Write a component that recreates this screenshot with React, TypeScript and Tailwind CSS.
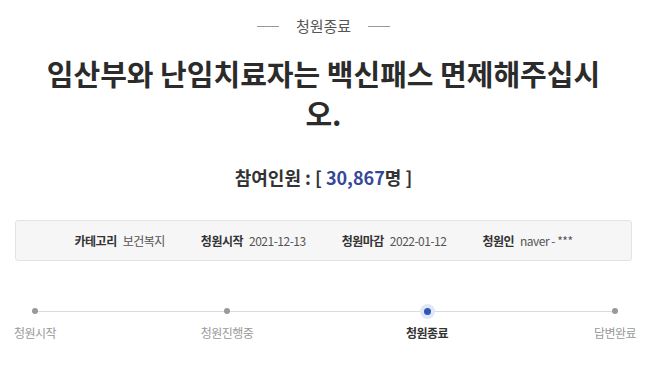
const steps = [
  { label: '청원시작', active: false, gap: '' },
  { label: '청원진행중', active: false, gap: 'ml-[132px]' },
  { label: '청원종료', active: true, gap: 'ml-[140px]' },
  { label: '답변완료', active: false, gap: 'ml-[128px]' },
];

const info = [
  { label: '카테고리', value: '보건복지' },
  { label: '청원시작', value: '2021-12-13' },
  { label: '청원마감', value: '2022-01-12' },
  { label: '청원인', value: 'naver - ***' },
];

export default function App() {
  return (
    <div
      className="w-[647px] h-[372px] bg-white overflow-hidden pt-[16px]"
      style={{ fontFamily: '"Noto Sans CJK KR", "Noto Sans", sans-serif' }}
    >
      {/* status heading */}
      <div className="flex items-center justify-center gap-[17px]">
        <span className="w-[22px] h-px bg-[#999]"></span>
        <span className="text-[15px] leading-[20px] text-[#555]">청원종료</span>
        <span className="w-[22px] h-px bg-[#999]"></span>
      </div>

      {/* title */}
      <h1 className="mt-[17px] px-[35px] text-center text-[29px] leading-[40px] font-bold text-[#2b2b2b]">
        임산부와 난임치료자는 백신패스 면제해주십시오.
      </h1>

      {/* participants */}
      <div className="mt-[31px] text-center text-[18px] leading-[26px] font-bold text-[#333]">
        참여인원 : [ <span className="text-[#35479a]">30,867</span>명 ]
      </div>

      {/* info box */}
      <div className="mx-[15px] mt-[30px] h-[41px] rounded-[3px] border border-[#e3e3e3] bg-[#f6f6f6] flex items-center justify-center gap-[36px] text-[12px] tracking-[-0.5px]">
        {info.map((item) => (
          <div key={item.label} className="flex items-center gap-[6px]">
            <span className="font-bold text-[#333]">{item.label}</span>
            <span className="text-[#555]">{item.value}</span>
          </div>
        ))}
      </div>

      {/* progress */}
      <div className="relative mt-[43px] pl-[5px] flex">
        <div className="absolute left-[35px] right-[32px] top-[7px] h-px bg-[#dcdcdc]"></div>
        {steps.map((s) => (
          <div key={s.label} className={`relative w-[60px] flex flex-col items-center ${s.gap}`}>
            <div className="h-[14px] flex items-center justify-center">
              {s.active ? (
                <span className="w-[15px] h-[15px] rounded-full bg-[#dfe7f8] flex items-center justify-center">
                  <span className="w-[7px] h-[7px] rounded-full bg-[#2f57b5]"></span>
                </span>
              ) : (
                <span className="w-[6px] h-[6px] rounded-full bg-[#999]"></span>
              )}
            </div>
            <span
              className={
                s.active
                  ? 'mt-[7px] whitespace-nowrap text-[12px] leading-[16px] tracking-[-0.5px] font-bold text-[#333]'
                  : 'mt-[7px] whitespace-nowrap text-[12px] leading-[16px] tracking-[-0.5px] text-[#999]'
              }
            >
              {s.label}
            </span>
          </div>
        ))}
      </div>
    </div>
  );
}
